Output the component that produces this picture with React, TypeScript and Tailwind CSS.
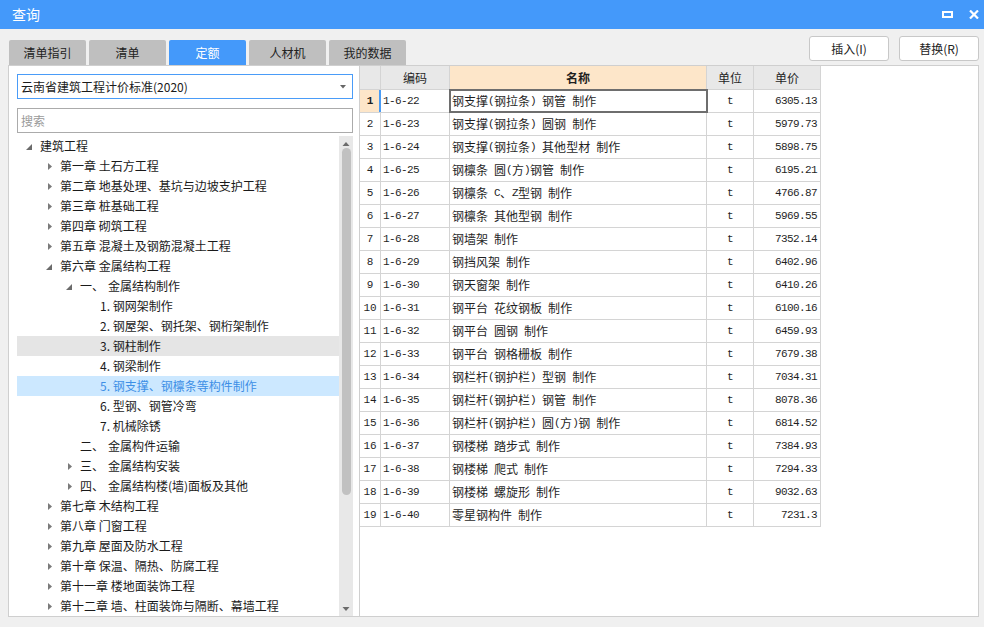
import React from 'react'

type Node = {
  label: string
  prefix?: string
  level: number
  state?: 'open' | 'closed'
  mark?: 'hover' | 'selected'
}

const TREE: Node[] = [
  { label: '建筑工程', level: 0, state: 'open' },
  { label: '第一章 土石方工程', level: 1, state: 'closed' },
  { label: '第二章 地基处理、基坑与边坡支护工程', level: 1, state: 'closed' },
  { label: '第三章 桩基础工程', level: 1, state: 'closed' },
  { label: '第四章 砌筑工程', level: 1, state: 'closed' },
  { label: '第五章 混凝土及钢筋混凝土工程', level: 1, state: 'closed' },
  { label: '第六章 金属结构工程', level: 1, state: 'open' },
  { prefix: '一、', label: '金属结构制作', level: 2, state: 'open' },
  { label: '1. 钢网架制作', level: 3 },
  { label: '2. 钢屋架、钢托架、钢桁架制作', level: 3 },
  { label: '3. 钢柱制作', level: 3, mark: 'hover' },
  { label: '4. 钢梁制作', level: 3 },
  { label: '5. 钢支撑、钢檩条等构件制作', level: 3, mark: 'selected' },
  { label: '6. 型钢、钢管冷弯', level: 3 },
  { label: '7. 机械除锈', level: 3 },
  { prefix: '二、', label: '金属构件运输', level: 2 },
  { prefix: '三、', label: '金属结构安装', level: 2, state: 'closed' },
  { prefix: '四、', label: '金属结构楼(墙)面板及其他', level: 2, state: 'closed' },
  { label: '第七章 木结构工程', level: 1, state: 'closed' },
  { label: '第八章 门窗工程', level: 1, state: 'closed' },
  { label: '第九章 屋面及防水工程', level: 1, state: 'closed' },
  { label: '第十章 保温、隔热、防腐工程', level: 1, state: 'closed' },
  { label: '第十一章 楼地面装饰工程', level: 1, state: 'closed' },
  { label: '第十二章 墙、柱面装饰与隔断、幕墙工程', level: 1, state: 'closed' },
]

const ROWS: [string, string, string][] = [
  ['1-6-22', '钢支撑(钢拉条) 钢管 制作', '6305.13'],
  ['1-6-23', '钢支撑(钢拉条) 圆钢 制作', '5979.73'],
  ['1-6-24', '钢支撑(钢拉条) 其他型材 制作', '5898.75'],
  ['1-6-25', '钢檩条 圆(方)钢管 制作', '6195.21'],
  ['1-6-26', '钢檩条 C、Z型钢 制作', '4766.87'],
  ['1-6-27', '钢檩条 其他型钢 制作', '5969.55'],
  ['1-6-28', '钢墙架 制作', '7352.14'],
  ['1-6-29', '钢挡风架 制作', '6402.96'],
  ['1-6-30', '钢天窗架 制作', '6410.26'],
  ['1-6-31', '钢平台 花纹钢板 制作', '6100.16'],
  ['1-6-32', '钢平台 圆钢 制作', '6459.93'],
  ['1-6-33', '钢平台 钢格栅板 制作', '7679.38'],
  ['1-6-34', '钢栏杆(钢护栏) 型钢 制作', '7034.31'],
  ['1-6-35', '钢栏杆(钢护栏) 钢管 制作', '8078.36'],
  ['1-6-36', '钢栏杆(钢护栏) 圆(方)钢 制作', '6814.52'],
  ['1-6-37', '钢楼梯 踏步式 制作', '7384.93'],
  ['1-6-38', '钢楼梯 爬式 制作', '7294.33'],
  ['1-6-39', '钢楼梯 螺旋形 制作', '9032.63'],
  ['1-6-40', '零星钢构件 制作', '7231.3'],
]

const TABS = ['清单指引', '清单', '定额', '人材机', '我的数据']

// level -> left padding (row starts at x=17, text at 40 + 20*level)
const INDENT = ['pl-[7px]', 'pl-[27px]', 'pl-[47px]', 'pl-[67px]']

function Toggle({ state }: { state?: 'open' | 'closed' }) {
  if (state === 'open') {
    return (
      <svg width="16" height="20" viewBox="0 0 16 20">
        <path d="M8 8 L8 14 L2 14 Z" fill="#6b6b6b" />
      </svg>
    )
  }
  if (state === 'closed') {
    return (
      <svg width="16" height="20" viewBox="0 0 16 20">
        <path d="M4 7 L8 10.5 L4 14 Z" fill="#7a7a7a" />
      </svg>
    )
  }
  return <span className="w-[16px]" />
}

function TreeRow({ node }: { node: Node }) {
  const bg =
    node.mark === 'hover' ? 'bg-[#e5e5e5]' : node.mark === 'selected' ? 'bg-[#cce8ff]' : ''
  const color = node.mark === 'selected' ? 'text-[#3d8fe6]' : 'text-[#1a1a1a]'
  return (
    <div className={`h-[20px] flex items-center whitespace-nowrap ${INDENT[node.level]} ${bg} ${color}`}>
      <Toggle state={node.state} />
      {node.prefix && <span className="inline-block w-[28px]">{node.prefix}</span>}
      <span>{node.label}</span>
    </div>
  )
}

// half-width characters get a fixed 6px cell, like the grid's SimSun text
function GridText({ text }: { text: string }) {
  return (
    <>
      {Array.from(text).map((ch, i) =>
        ch.charCodeAt(0) < 128 ? (
          <span key={i} className="inline-block w-[6px] text-center font-['Liberation_Mono',monospace] text-[11px]">
            {ch === ' ' ? '\u00a0' : ch}
          </span>
        ) : (
          <span key={i}>{ch}</span>
        )
      )}
    </>
  )
}

const mono = "font-['Liberation_Mono',monospace] text-[11px] tracking-[-0.6px]"

export default function App() {
  return (
    <div className="w-[984px] h-[627px] bg-[#f0f0f0] flex flex-col overflow-hidden font-['Microsoft_YaHei','Noto_Sans_CJK_SC',sans-serif] text-[12px]">
      {/* Title bar */}
      <div className="h-[29px] bg-[#4499fa] flex items-center justify-between pl-[12px] pr-[5px] text-white">
        <span className="text-[14px]">查询</span>
        <div className="flex items-center gap-[16px]">
          <svg width="11" height="7" viewBox="0 0 11 7" className="mr-[0px]">
            <rect x="1" y="1" width="9" height="5" fill="none" stroke="#fff" strokeWidth="2" />
          </svg>
          <svg width="10" height="9" viewBox="0 0 10 9">
            <path d="M1 0.5 L9 8.5 M9 0.5 L1 8.5" stroke="#fff" strokeWidth="2.2" />
          </svg>
        </div>
      </div>

      <div className="flex-1 flex flex-col pl-[8px] pr-[5px]">
        {/* Tabs + action buttons */}
        <div className="h-[36px] flex justify-between">
          <div className="flex items-end gap-[3px] pl-[1px]">
            {TABS.map((t) => (
              <div
                key={t}
                className={`w-[77px] h-[25px] rounded-t-[2px] flex items-center justify-center text-[12px] ${
                  t === '定额' ? 'bg-[#4499fa] text-white' : 'bg-[#bfbfbf] text-[#222]'
                }`}
              >
                {t}
              </div>
            ))}
          </div>
          <div className="flex gap-[10px] pt-[7px]">
            <button className="w-[80px] h-[25px] bg-white border border-[#c8c8c8] rounded-[3px] text-[12px] text-[#222]">
              插入(I)
            </button>
            <button className="w-[80px] h-[25px] bg-white border border-[#c8c8c8] rounded-[3px] text-[12px] text-[#222]">
              替换(R)
            </button>
          </div>
        </div>

        {/* Panels */}
        <div className="h-[552px] flex">
          {/* Left: tree */}
          <div className="w-[352px] bg-white border border-[#cfcfcf] pt-[8px] pl-[8px]">
            <div className="w-[336px] h-[25px] border border-[#4a9cf8] flex items-center justify-between pl-[3px] pr-[6px] text-[#1a1a1a]">
              <span>云南省建筑工程计价标准(2020)</span>
              <svg width="6" height="4" viewBox="0 0 6 4">
                <path d="M0 0 L6 0 L3 3.5 Z" fill="#666" />
              </svg>
            </div>
            <div className="mt-[9px] w-[336px] h-[25px] border border-[#ababab] flex items-center pl-[3px] text-[#9a9a9a]">
              搜索
            </div>
            <div className="mt-[3px] h-[480px] flex w-[336px]">
              <div className="w-[322px] overflow-hidden">
                {TREE.map((n, i) => (
                  <TreeRow key={i} node={n} />
                ))}
              </div>
              <div className="w-[14px] bg-[#e8e8e8] flex flex-col items-center">
                <svg width="8" height="12" viewBox="0 0 8 12" className="mt-[1px]">
                  <path d="M0.5 9 L7.5 9 L4 5 Z" fill="#6b6b6b" />
                </svg>
                <div className="mt-[-1px] w-[9px] h-[347px] rounded-full bg-[#c1c1c1]" />
                <div className="flex-1" />
                <svg width="8" height="12" viewBox="0 0 8 12">
                  <path d="M0.5 3 L7.5 3 L4 7 Z" fill="#6b6b6b" />
                </svg>
              </div>
            </div>
          </div>

          {/* Right: table */}
          <div className="flex-1 bg-white border border-l-0 border-[#cfcfcf]">
            <div className="w-[461px] text-[#1f1f1f]">
              <div className="h-[24px] flex border-b border-[#d4d4d4]">
                <div className="w-[21px] bg-[#e8e8e8] border-r border-[#d4d4d4]" />
                <div className="w-[69px] bg-[#e8e8e8] border-r border-[#d4d4d4] flex items-center justify-center">编码</div>
                <div className="w-[257px] bg-[#fde6c9] border-r border-[#d4d4d4] flex items-center justify-center font-bold">名称</div>
                <div className="w-[47px] bg-[#e8e8e8] border-r border-[#d4d4d4] flex items-center justify-center">单位</div>
                <div className="w-[67px] bg-[#e8e8e8] border-r border-[#d4d4d4] flex items-center justify-center">单价</div>
              </div>
              {ROWS.map(([code, name, price], i) => {
                const first = i === 0
                return (
                  <div key={code} className="h-[23px] flex border-b border-[#d4d4d4]">
                    <div
                      className={`w-[21px] flex items-center justify-center font-['Liberation_Mono',monospace] text-[11px] ${
                        first
                          ? 'bg-[#fde6c9] font-bold border-r-2 border-[#4a9cf5] pl-[1px]'
                          : 'border-r border-[#d4d4d4]'
                      }`}
                    >
                      {i + 1}
                    </div>
                    <div className={`w-[69px] border-r border-[#d4d4d4] flex items-center pl-[2px] ${mono}`}>
                      {code}
                    </div>
                    <div
                      className={`w-[257px] border-r border-[#d4d4d4] flex items-center pl-[2px] whitespace-nowrap ${
                        first ? 'outline-2 outline-solid outline-[#6e6e6e] -outline-offset-1' : ''
                      }`}
                    >
                      <GridText text={name} />
                    </div>
                    <div className={`w-[47px] border-r border-[#d4d4d4] flex items-center justify-center ${mono}`}>
                      t
                    </div>
                    <div className={`w-[67px] border-r border-[#d4d4d4] flex items-center justify-end pr-[3px] ${mono}`}>
                      {price}
                    </div>
                  </div>
                )
              })}
            </div>
          </div>
        </div>
      </div>
    </div>
  )
}
